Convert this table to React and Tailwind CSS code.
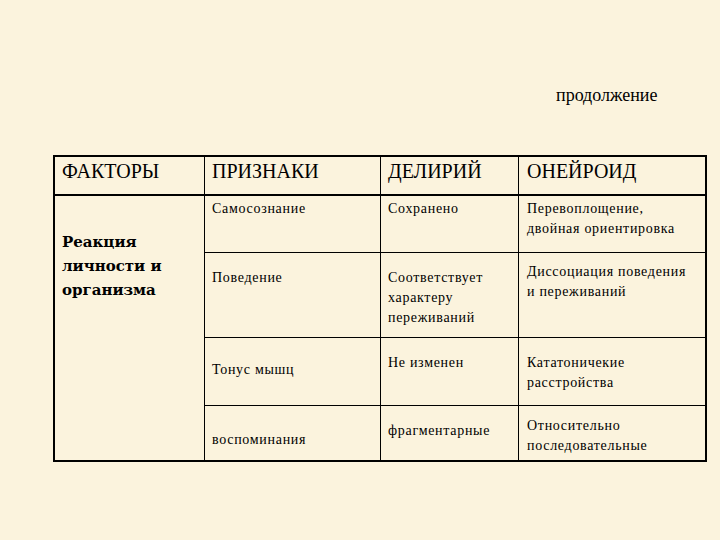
import React from 'react';

const serif = "font-['Liberation_Serif','Times_New_Roman',serif]";

const rows = [
  { h: 'h-[57px]', cells: [[['Самосознание'], 'pt-[3px]'], [['Сохранено'], 'pt-[3px]'], [['Перевоплощение,', 'двойная ориентировка'], 'pt-[3px]']] },
  { h: 'h-[85px]', cells: [[['Поведение'], 'pt-[15px]'], [['Соответствует', 'характеру', 'переживаний'], 'pt-[15px]'], [['Диссоциация поведения', 'и переживаний'], 'pt-[9px]']] },
  { h: 'h-[68px]', cells: [[['Тонус мышц'], 'pt-[22px]'], [['Не изменен'], 'pt-[15px]'], [['Кататоничекие', 'расстройства'], 'pt-[15px]']] },
  { h: 'h-[54px]', cells: [[['воспоминания'], 'pt-[24px]'], [['фрагментарные'], 'pt-[15px]'], [['Относительно', 'последовательные'], 'pt-[10px]']] },
];

const Cell = ({ lines, pad, className }) => (
  <div className={`${pad} ${className} text-[14px] leading-[20px] tracking-[0.7px] whitespace-nowrap`}>
    {lines.map((l, i) => (
      <div key={i}>{l}</div>
    ))}
  </div>
);

const App = () => {
  return (
    <div className={`w-[720px] h-[540px] bg-[#fbf3dd] text-black ${serif} overflow-hidden`}>
      {/* подпись сверху */}
      <div className="pt-[84px] pl-[556px] text-[18px] leading-[22px]">продолжение</div>

      {/* таблица */}
      <div className="mt-[49px] ml-[53px] w-[654px] border-2 border-black">
        {/* шапка */}
        <div className="grid grid-cols-[150px_176px_138px_186px] h-[39px] border-b-2 border-black text-[20px] leading-[22px]">
          <div className="border-r border-black pl-[7px] pt-[3px]">ФАКТОРЫ</div>
          <div className="border-r border-black pl-[7px] pt-[3px]">ПРИЗНАКИ</div>
          <div className="border-r border-black pl-[7px] pt-[3px]">ДЕЛИРИЙ</div>
          <div className="pl-[8px] pt-[3px]">ОНЕЙРОИД</div>
        </div>

        <div className="flex">
          <div className="w-[150px] border-r border-black pl-[7px] pt-[34px] font-['DejaVu_Serif',serif] font-bold text-[15px] leading-[24px]">
            Реакция
            <br />
            личности и
            <br />
            организма
          </div>
          <div className="flex flex-col w-[500px]">
            {rows.map((r, i) => (
              <div
                key={i}
                className={`grid grid-cols-[176px_138px_186px] ${r.h} ${i < rows.length - 1 ? 'border-b border-black' : ''}`}
              >
                <Cell lines={r.cells[0][0]} pad={r.cells[0][1]} className="border-r border-black pl-[7px]" />
                <Cell lines={r.cells[1][0]} pad={r.cells[1][1]} className="border-r border-black pl-[7px]" />
                <Cell lines={r.cells[2][0]} pad={r.cells[2][1]} className="pl-[8px]" />
              </div>
            ))}
          </div>
        </div>
      </div>
    </div>
  );
};

export default App;
